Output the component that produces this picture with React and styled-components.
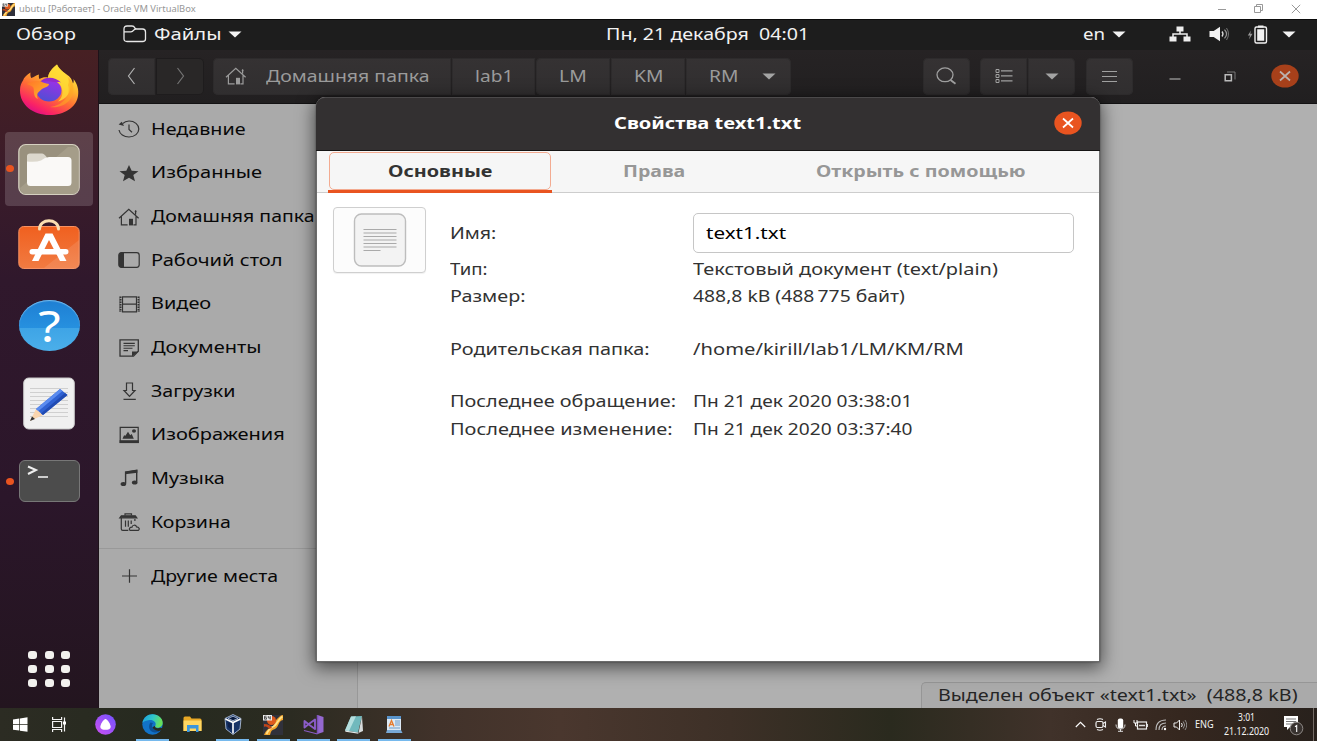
import React, { useLayoutEffect, useRef, useState } from 'react';
import styled, { createGlobalStyle, css } from 'styled-components';

const Global = createGlobalStyle`
  * { box-sizing: border-box; }
  html, body { margin: 0; padding: 0; overflow: hidden; }
  body { font-family: "Noto Sans", "Open Sans", sans-serif; }
`;

/* ---------- stretched text ---------- */
const TextBox = styled.span`
  display: inline-block;
  flex: none;
  width: ${(p) => p.$w}px;
  white-space: pre;
  line-height: 1.3;
`;
const TextInner = styled.span`
  display: inline-block;
  transform-origin: 0 50%;
`;
function Text({ w, children, className }) {
  const ref = useRef(null);
  const [scale, setScale] = useState(1);
  useLayoutEffect(() => {
    if (ref.current) setScale(w / ref.current.offsetWidth);
  }, [w]);
  return (
    <TextBox $w={w} className={className}>
      <TextInner ref={ref} style={{ transform: `scaleX(${scale})` }}>{children}</TextInner>
    </TextBox>
  );
}

/* ---------- screen ---------- */
const Screen = styled.div`
  width: 1317px;
  height: 741px;
  display: flex;
  flex-direction: column;
  overflow: hidden;
  background: #fff;
`;
const HostTitle = styled.header`
  height: 19px;
  flex: none;
  display: flex;
  align-items: center;
  padding: 0 16px 0 2px;
  background: #fff;
  color: #979797;
  font-size: 9.6px;
`;
const HostName = styled(Text)`margin-left: 4px;`;
const HostControls = styled.div`
  margin-left: auto;
  height: 17px;
  display: flex;
  align-items: center;
  gap: 27px;
  align-self: flex-start;
`;
const Guest = styled.main`
  position: relative;
  height: 689px;
  flex: none;
  display: flex;
  flex-direction: column;
`;
const TopBar = styled.div`
  height: 31px;
  flex: none;
  display: grid;
  grid-template-columns: 606px 203px 1fr;
  align-items: center;
  padding-bottom: 2px;
  background: #1d1d1d;
  border-top: 1px solid #0b0b0b;
  color: #f2f2f2;
  font-size: 16.6px;
`;
const BarGroup = styled.div`
  display: flex;
  align-items: center;
  padding-left: ${(p) => p.$start}px;
`;
const Gap = styled.span`flex: none; width: ${(p) => p.$w}px;`;
const Desktop = styled.div`flex: 1; display: flex; min-height: 0;`;

/* ---------- dock ---------- */
const Dock = styled.nav`
  width: 99px;
  flex: none;
  display: flex;
  flex-direction: column;
  gap: 4.3px;
  padding: 4px 5px 0;
  background: linear-gradient(#472023 0, #3c1c29 110px, #30182c 230px, #2b162a 450px, #23151f 658px);
  border-right: 1px solid #1d1219;
`;
const DockItem = styled.div`
  position: relative;
  width: 88px;
  height: 74px;
  flex: none;
  display: flex;
  align-items: center;
  justify-content: center;
  padding-bottom: ${(p) => p.$lift || 0}px;
  border-radius: 4px;
  background: ${(p) => (p.$active ? 'rgba(255,255,255,.16)' : 'transparent')};
`;
const Running = styled.i`
  position: absolute;
  left: .5px;
  top: 33px;
  width: 8px;
  height: 7px;
  border-radius: 50%;
  background: #e95420;
`;
const AppGrid = styled.div`
  margin: auto auto 21px;
  display: grid;
  grid-template-columns: repeat(3, 9px);
  grid-auto-rows: 8px;
  column-gap: 7.5px;
  row-gap: 5.8px;
`;
const Dot = styled.i`background: #f2f1ee; border-radius: 3px;`;

/* ---------- file manager ---------- */
const FileWindow = styled.section`flex: 1; display: flex; flex-direction: column; min-width: 0;`;
const Toolbar = styled.div`
  height: 54px;
  flex: none;
  display: flex;
  align-items: flex-start;
  padding: 8px 0 0 9px;
  background: linear-gradient(#262324, #211f20);
  border-bottom: 1px solid #131213;
  color: #9b9b9b;
  font-size: 16.6px;
`;
const ToolButton = styled.div`
  height: 37px;
  width: ${(p) => p.$w}px;
  flex: none;
  display: flex;
  align-items: center;
  justify-content: center;
  padding-bottom: 1px;
  background: ${(p) => (p.$dim ? '#292727' : 'linear-gradient(#353233, #302e2f)')};
  box-shadow: inset 0 0 0 1px ${(p) => (p.$dim ? '#1e1c1d' : '#2d2b2c')};
  border-radius: ${(p) => p.$r || '5px'};
  margin-right: ${(p) => (p.$mr === undefined ? 1 : p.$mr)}px;
`;
const PathName = styled(Text)`margin-bottom: 1px;`;
const WindowControls = styled.div`
  height: 36px;
  margin-left: 36.5px;
  display: flex;
  align-items: center;
`;
const Body = styled.div`flex: 1; display: flex; min-height: 0;`;
const Sidebar = styled.aside`
  width: 259px;
  flex: none;
  padding-top: 3.5px;
  background: #aaaaaa;
  border-right: 1px solid #989898;
  color: #080808;
  font-size: 16.6px;
`;
const Place = styled.div`
  height: 43.65px;
  display: flex;
  align-items: center;
  padding-left: 19px;
  gap: 11px;
`;
const PlaceName = styled(Text)`margin-bottom: 1.6px;`;
const Divider = styled.div`height: 1px; background: #999; margin: 4.4px 0 5.3px;`;
const Content = styled.div`
  flex: 1;
  display: flex;
  align-items: flex-end;
  justify-content: flex-end;
  background: #b0b0b0;
`;
const Status = styled.div`
  width: 396px;
  height: 26px;
  display: flex;
  align-items: center;
  padding-left: 16px;
  border: 1px solid #969696;
  border-width: 1px 0 0 1px;
  border-radius: 5px 0 0 0;
  background: #aaa;
  color: #252525;
  font-size: 17px;
`;

/* ---------- dialog ---------- */
const Dialog = styled.section`
  position: absolute;
  left: 316px;
  top: 78px;
  width: 784px;
  height: 565px;
  display: flex;
  flex-direction: column;
  background: #fff;
  border: 1px solid #6b6b6b;
  border-top: 0;
  border-radius: 9px 9px 0 0;
  box-shadow: 0 4px 17px 2px rgba(0,0,0,.55), 0 0 2px rgba(0,0,0,.5);
`;
const DialogHeader = styled.header`
  height: 54px;
  margin: 0 -1px;
  flex: none;
  display: grid;
  grid-template-columns: 298px 187px 1fr;
  align-items: center;
  padding-bottom: 2px;
  background: #333031;
  border-top: 1px solid #4b494a;
  border-bottom: 1px solid #151414;
  border-radius: 9px 9px 0 0;
  color: #fff;
  font-size: 16.4px;
  font-weight: 700;
`;
const TitleText = styled(Text)`grid-column: 2; margin-bottom: 1px;`;
const CloseSlot = styled.div`display: flex; justify-content: flex-end; padding-right: 18px;`;
const Tabs = styled.div`
  height: 42px;
  flex: none;
  display: flex;
  padding-left: 10.5px;
  background: #f6f6f6;
  border-bottom: 1px solid #cdcdcd;
  font-size: 16.4px;
  font-weight: 700;
`;
const Tab = styled.div`
  height: 42px;
  width: ${(p) => p.$w}px;
  display: flex;
  justify-content: center;
  color: #979797;
  padding: ${(p) => (p.$active ? '1px 1px 0' : '0')};
  ${(p) => p.$active && css`color: #333; border-bottom: 3px solid #e95420;`}
`;
const TabFace = styled.div`
  width: 100%;
  height: ${(p) => (p.$active ? 38 : 40)}px;
  display: flex;
  align-items: center;
  justify-content: center;
  padding-bottom: ${(p) => (p.$active ? 1 : 2)}px;
  border: 1px solid ${(p) => (p.$active ? '#f3ab91' : 'transparent')};
  border-bottom-width: ${(p) => (p.$active ? 1 : 0)}px;
  border-radius: ${(p) => (p.$active ? '5px' : '0')};
`;
const Page = styled.div`flex: 1; display: flex; padding: 14px 0 0 16px;`;
const Thumb = styled.div`
  width: 93px;
  height: 66px;
  flex: none;
  display: flex;
  align-items: center;
  justify-content: center;
  border: 1px solid #cfcfcf;
  border-radius: 4px;
  background: #fcfcfc;
  box-shadow: 0 1px 1px rgba(0,0,0,.06);
`;
const Properties = styled.div`
  padding: 6px 0 0 24.4px;
  font-size: 16.6px;
  color: #323232;
`;
const Property = styled.div`
  display: grid;
  grid-template-columns: 243px 381px;
  align-items: center;
  height: ${(p) => p.$h}px;
  margin-top: ${(p) => p.$mt || 0}px;
`;
const Entry = styled.div`
  height: 39.5px;
  display: flex;
  align-items: center;
  padding: 0 0 1px 11.5px;
  border: 1px solid #c6c6c6;
  border-radius: 5px;
  color: #000;
`;

/* ---------- host taskbar ---------- */
const Taskbar = styled.footer`
  height: 33px;
  flex: none;
  display: flex;
  background: linear-gradient(90deg, #2c2c23 0, #262a1f 170px, #2b2b21 290px, #41322a 440px, #4a372e 560px, #3d3027 730px, #2a2a1e 890px, #40322a 1050px, #35271f 1180px, #28211c 1317px);
  color: #f4f4f4;
`;
const Task = styled.div`
  width: ${(p) => p.$w || 40.3}px;
  flex: none;
  display: flex;
  align-items: center;
  justify-content: center;
  ${(p) => p.$open && css`
    background: linear-gradient(#76b9ed, #76b9ed) center bottom / 33px 2px no-repeat;
  `}
`;
const Tray = styled.div`
  margin-left: auto;
  display: flex;
  font-size: 10.6px;
`;
const TraySlot = styled.div`
  width: ${(p) => p.$w}px;
  display: flex;
  flex-direction: column;
  align-items: center;
  justify-content: center;
  padding-bottom: ${(p) => p.$lift || 0}px;
`;
const ClockLine = styled(Text)`line-height: 14px;`;
const ShowDesktop = styled.div`width: 4px; border-left: 1px solid #746b65;`;

/* ---------- icons ---------- */
const Icon = styled.svg`flex: none; display: block;`;
const Svg = ({ w, h, children, ...rest }) => (
  <Icon width={w} height={h} viewBox={`0 0 ${w} ${h}`} fill="none" {...rest}>{children}</Icon>
);
const Caret = ({ c = '#f2f2f2' }) => <Svg w={14} h={7}><path d="M.5.5h13L7 6.5z" fill={c} /></Svg>;
const VmIcon = ({ s = 13 }) => (
  <Icon width={s} height={s} viewBox="0 0 20 20">
    <rect width="20" height="20" fill="#30313b" />
    <path d="M20 0v5c-5 1-4 7-8 9-4 1-4 3-5 6H1c2-4 3-6 7-7 4-2 3-7 7-10 2-2 3-3 5-3z" fill="#f0a42c" />
    <path d="M19.500 1.500c-5 3-5 8-9 10-4 1-5 4-7 7.500" stroke="#ffe28a" strokeWidth="1.800" fill="none" />
    <circle cx="8.500" cy="5.500" r="4.500" fill="#dd5a1e" />
    <path d="M1 9c4 0 6 1 8 4l-3 1c-1-2-3-3-5-2z" fill="#c2461a" />
    <rect width="9" height="5.500" fill="#eee" />
    <path d="M3.500 1.200h-2v3h2V2.700h-2M5.300 1v2h2.200M7.200 1v3.500" stroke="#333" strokeWidth=".8" fill="none" />
  </Icon>
);
const Close = ({ fill, stroke }) => (
  <Svg w={28} h={24}><ellipse cx="14" cy="12" rx="13.700" ry="11.600" fill={fill} /><path d="M9 7.500l10 9M19 7.500l-10 9" stroke={stroke} strokeWidth="1.700" /></Svg>
);
const Home = ({ c = '#343434' }) => (
  <Svg w={22} h={18}>
    <path d="M1 10.200L10.800 1.200l9.800 9M3.400 8.400v8.400h6.200M18 8.400v8.400h-2.600M17.600 2.600v3.800" stroke={c} strokeWidth="1.200" />
    <path d="M11 17.400v-6.600h4v6.600z" fill={c} /><circle cx="17.600" cy="3.400" r=".9" fill={c} />
  </Svg>
);

const K = '#343434';
const placeIcons = {
  recent: <g stroke={K} strokeWidth="1.200"><path d="M4.600 3.700C6.200 2 8.400 1 11 1c5.600 0 9.800 3.600 9.800 8s-4.200 8-9.800 8C5.800 17 1.700 14 1 10" /><path d="M11 4.500v5l3 2.700" /><path d="M.6 4.500l3.200-2.700 2.200 4.200z" fill={K} stroke="none" /></g>,
  star: <path d="M11 1l2.700 5.700 6.800.5-5.200 3.900 1.700 6.100-6-3.400-6 3.400 1.700-6.100-5.200-3.900 6.800-.5z" fill={K} />,
  desktop: <g><rect x=".8" y="1.700" width="20.400" height="14.600" rx="2.500" stroke={K} strokeWidth="1.200" /><path d="M1 3.500q0-1.800 1.800-1.800H6v14.600H2.800Q1 16.300 1 14.500z" fill={K} /></g>,
  video: <g stroke={K} strokeWidth="1.200"><path d="M4.500 1.800h14v15h-14zM4.500 9.200h14" /><path d="M2.600 1.500V17M20.400 1.500V17" strokeWidth="1.800" strokeDasharray="1.500 1" /><path d="M1.800 1.500V17M21.200 1.500V17" strokeWidth=".6" /></g>,
  docs: <g stroke={K} strokeWidth="1.300"><path d="M2 .8h18.300v11.500l-4.800 4.900H2z" /><path d="M5.500 4.400h11.300M5.500 6.800h11.300M5.500 9.200h9M5.500 11.600h4.500" strokeWidth="1.100" /><path d="M14 17.500v-5h6.500z" fill={K} stroke="none" /></g>,
  down: <path d="M8.500 1h6v7.500H17l-5.500 5.800L6 8.500h2.500zM5.500 17.300h12.300" stroke={K} strokeWidth="1.200" />,
  pictures: <g><path d="M2.200 1.400h18v15h-18z" stroke={K} strokeWidth="1.200" /><path d="M1.600 14.200h19.200v2.900H1.600z" fill={K} /><path d="M4.500 12.700l1.600-3.500 1.300.5 2.600-4 2.200 3.600 1.500-1.400 2.100 4.800z" fill={K} /><ellipse cx="16" cy="5" rx="2" ry="1.700" fill={K} /></g>,
  music: <g><path d="M7.600 14.500V3.200L18.700 1.400v11.400" stroke={K} strokeWidth="1.400" /><path d="M7 2.700L19.400.8v3L7 5.300z" fill={K} /><ellipse cx="5.400" cy="15" rx="2.800" ry="2" fill={K} /><ellipse cx="16.700" cy="13.500" rx="2.800" ry="2" fill={K} /></g>,
  trash: <g stroke={K} strokeWidth="1.200"><path d="M1.800 4.800h17l-1.500-2H3.300z" fill={K} /><path d="M7 2.500V.8h6.500v1.700M3.300 5v11q0 1.300 1.500 1.300h5.500M7.500 7.500v6.300M10.300 7.500v6.300M13.200 7.500v3.500M16.900 6v2" /><path d="M12 17.400c-1.500-1.600 0-3.300 2-3.300.2-2.400 4-2.500 4.500-.3 2.500 0 3.700 2.400 1.700 3.600z" /></g>,
  plus: <path d="M11.500 2.300v13.400M4 9h15" stroke={K} strokeWidth="1.200" />,
};
const PlaceIcon = ({ name }) => (name === 'home' ? <Home /> : <Svg w={22} h={18}>{placeIcons[name]}</Svg>);

const Firefox = () => (
  <Svg w={60} h={52}>
    <defs>
      <linearGradient id="ffa" x1=".85" y1="0" x2=".25" y2="1"><stop stopColor="#fff44f" /><stop offset=".35" stopColor="#ffb52e" /><stop offset=".6" stopColor="#ff6b35" /><stop offset=".85" stopColor="#fa2365" /><stop offset="1" stopColor="#d80b8c" /></linearGradient>
      <linearGradient id="ffb" x1=".8" y1="0" x2=".4" y2="1"><stop stopColor="#a02fe8" /><stop offset="1" stopColor="#514ed4" /></linearGradient>
      <linearGradient id="ffc" x1="0" y1="0" x2="1" y2="1"><stop stopColor="#ff7628" /><stop offset="1" stopColor="#ffb82b" /></linearGradient>
    </defs>
    <path d="M38 .5c2 5 6 7 9 9.500 5 3 6 6 7 9.500.8-1 .8-3 .5-4.500 4 5 5.500 11 4.500 17C57.500 43.500 45 51 30.500 51 14 51 1 41 1 26.500c0-5 1.500-8 3-10 .8-3 4-6 7.500-8-.3 2 0 4 .7 5.500 3-.8 4.500-2.500 7.800-3.500-.5 2 0 3.500.5 4.500 3-2 6-2 8.500-1.500C29.500 9 33 4 38 .5z" fill="url(#ffa)" />
    <path d="M38 .5c3 6 11 10 13 18 2 10-4 17-12 19 5-4 6-11 2-17-4-5-11-5-12-7C29.500 9 33 4 38 .5z" fill="#ffdd35" opacity=".8" />
    <path d="M49 21c3 10-4 20-18 22 14 2 26-8 23-22-1-4-3-6-5-8 1 4 1 5 0 8z" fill="#ffaa22" opacity=".55" />
    <ellipse cx="30" cy="26.500" rx="12.500" ry="11" fill="url(#ffb)" />
    <path d="M21 18c4-5.500 15-6 21 .5-3-1-5 0-7-.5-5-1-9-1-14 0z" fill="#9529ca" />
    <path d="M8 20c4-3 11-4 16-1.500 2 1 5 1 6 1.500 0 3-5 3.500-7 5-5 4-6 6-4 10C13 33 16 25 14 23c-2-1.500-4-2-6-3z" fill="url(#ffc)" />
  </Svg>
);
const FilesApp = () => (
  <Svg w={62} h={53}>
    <rect x=".8" y="1.500" width="60.400" height="50" rx="7" fill="#99917e" stroke="#d5d0c0" strokeWidth="1.200" />
    <path d="M2 45L50 4h6q5 1 5 6v35q0 5-6 6H8q-5 0-6-6z" fill="#aaa38f" opacity=".7" />
    <path d="M9 13q0-2.500 3-2.500h12q2 0 5 4v6H9z" fill="#dcd8cd" />
    <path d="M9 18.500q9 1 14-1 4-3.500 8-3.500h19q3.500 0 3.500 3.500v22q0 3.500-3.500 3.500H12.500Q9 43 9 39.500z" fill="#faf9f7" />
  </Svg>
);
const Software = () => (
  <Svg w={62} h={52}>
    <defs><linearGradient id="sw" x1="0" y1="0" x2="0" y2="1"><stop stopColor="#f0601f" /><stop offset="1" stopColor="#f17b42" /></linearGradient></defs>
    <rect x=".8" y="8.500" width="60.400" height="42" rx="5" fill="url(#sw)" stroke="#f79162" strokeWidth="1" />
    <path d="M26 50L61 22v24q0 4-5 4.500z" fill="#fff" opacity=".1" />
    <path d="M21.500 11c0-11 19-11 19 0" stroke="#f9dfb2" strokeWidth="3" strokeLinecap="round" />
    <path d="M27.500 15.500h7L48.500 43h-6.500L31 22 20.500 43H14z" fill="#fff" /><rect x="11.500" y="31" width="39" height="5.500" rx="2.700" fill="#fff" />
  </Svg>
);
const HelpFace = styled.div`
  width: 61px;
  height: 51px;
  border-radius: 50%;
  display: flex;
  align-items: center;
  justify-content: center;
  padding-left: 1px;
  background: linear-gradient(#1e7fd3 0, #2690df 54%, #3ea4e6 55%, #4bafea 100%);
  box-shadow: inset 0 1px 1px #76bbec;
  color: #fff;
  font-size: 43px;
  line-height: 50px;
`;
const HelpMark = styled.span`transform: scaleX(1.2);`;
const Editor = () => (
  <Svg w={52} h={53}>
    <rect x=".7" y="1" width="50.600" height="51" rx="5" fill="#f0f0f0" stroke="#c8c8c8" />
    <path d="M7 11.500h38M7 15.500h38M7 19.500h38M7 23.500h38M7 27.500h38M7 31.500h38M7 35.500h38M7 39.500h38" stroke="#cfcfcf" strokeWidth="1" />
    <path d="M7 44l6-12 7 6z" fill="#f9d5ae" /><path d="M7 44l2-4.500 3 2.500z" fill="#333" />
    <path d="M13 32L37 12l7.500 6L20 38z" fill="#2f61d2" /><path d="M13 32L37 12l2.500 2L15.500 34z" fill="#5a8bef" /><path d="M18 36.500L42 16l2.500 2L20 38z" fill="#214bb2" />
  </Svg>
);
const TerminalFace = styled.div`
  width: 61px;
  height: 42px;
  border-radius: 6px;
  border: 1px solid #777;
  background: #4c4c4c;
  padding: 2px 0 0 7px;
`;

const Places = [
  ['recent', 'Недавние', 95], ['star', 'Избранные', 111], ['home', 'Домашняя папка', 163],
  ['desktop', 'Рабочий стол', 131], ['video', 'Видео', 60], ['docs', 'Документы', 111],
  ['down', 'Загрузки', 84], ['pictures', 'Изображения', 134], ['music', 'Музыка', 74], ['trash', 'Корзина', 80],
];
const Details = [
  ['Тип:', 38, 'Текстовый документ (text/plain)', 305, 26, 3],
  ['Размер:', 75, '488,8 kB (488\u2009775 байт)', 212, 27, 0],
  ['Родительская папка:', 200, '/home/kirill/lab1/LM/KM/RM', 271, 27, 26],
  ['Последнее обращение:', 226, 'Пн 21 дек 2020 03:38:01', 219, 27, 25.5],
  ['Последнее изменение:', 222, 'Пн 21 дек 2020 03:37:40', 219, 28, 0.5],
];

function TaskIcons() {
  return (
    <>
      <Task $w={40}><Svg w={15} h={15}><path d="M0 2.400l6.300-.9v5.700H0zM7 1.400L14.500.3v6.900H7zM0 8h6.300v5.600L0 12.700zM7 8h7.500v6.800L7 13.700z" fill="#fff" /></Svg></Task>
      <Task $w={38}><Svg w={15} h={15}><path d="M.6 0v2.500h9V0M.6 15v-2.500h9V15M.6 4.500h9v6h-9zM12.500.5v14" stroke="#f3f3f3" strokeWidth="1.200" /><path d="M11 4.500h3v3h-3z" fill="#fff" /></Svg></Task>
      <Task $w={54}><Svg w={21} h={21}><defs><linearGradient id="ya" x1="1" y1="0" x2="0" y2="1"><stop stopColor="#6f52ff" /><stop offset="1" stopColor="#cf50f2" /></linearGradient></defs><circle cx="10.500" cy="10.500" r="10.300" fill="url(#ya)" /><path d="M10.500 5c1.800 0 5.200 5.500 5.200 8 0 3.800-10.400 3.800-10.400 0 0-2.500 3.400-8 5.200-8z" fill="#fff" /></Svg></Task>
      <Task $open><Svg w={21} h={21}><defs><linearGradient id="ed" x1="0" y1="0" x2="1" y2=".3"><stop stopColor="#1b9de2" /><stop offset=".55" stopColor="#30c6c8" /><stop offset="1" stopColor="#67e05b" /></linearGradient></defs><circle cx="10.500" cy="10.500" r="10.200" fill="#1273c8" /><path d="M.4 9C1.500 3.500 5.500.3 10.500.3c6 0 10.200 4.200 10.200 8.500 0 3.300-2.500 5-5.200 5-2 0-3-.8-2.200-2C15 8 11 5.500 7.500 6 4 6.300 1.500 7.500.4 9z" fill="url(#ed)" /><path d="M8.500 8.500c-3 4-1 9.500 4 10 3 .3 5.500-1 7-3-4 1.700-8.500.5-9.500-3-.4-1.700.3-2.700 1-3.500z" fill="#0c4f94" /><path d="M13.200 11.800c-1 1.800 1.800 3.200 5 2l2.800.5-1.500 2c-4 1.500-8 0-9-3z" fill="#282b20" /></Svg></Task>
      <Task><Svg w={19} h={17}><path d="M.5 2q0-1.500 1.500-1.500h5l1.500 2H17q1.500 0 1.500 1.500v11H.5z" fill="#e8a825" /><path d="M.5 4.500h18V15H.5z" fill="#ffd763" /><path d="M4 9h11.500v7H13v-3.500H6.700V16H4z" fill="#3a96dd" /></Svg></Task>
      <Task $open><Svg w={18} h={21}><path d="M9 .5l8 4-1 10.500L9 20.500 2 15 1 4.500z" fill="#173468" stroke="#aebed8" strokeWidth=".9" /><path d="M1.500 5L9 8.500 16.500 5M9 8.500v11" stroke="#fff" strokeWidth="1.600" /><path d="M4 4.500l5-2.300 5 2.300-5 2.200z" fill="#0b1d42" stroke="#d9e1ef" strokeWidth=".7" /><path d="M3.500 8l4 2v5.500l-3.500-2.500z" fill="#0d214b" /></Svg></Task>
      <Task $open><VmIcon s={20} /></Task>
      <Task $open><Svg w={21} h={21}><path d="M14.500 1L20.500 3v15l-6 2z" fill="#9468cf" /><path d="M14.500 1v19" stroke="#7c50bb" strokeWidth="1.500" /><path d="M1.500 7v6.500l4-3.200zM5.500 10.300l6.500-4.800v9.500z" stroke="#8a5cc7" strokeWidth="1.900" strokeLinejoin="round" /><path d="M1 16.500l13.500 3.500" stroke="#8a5cc7" strokeWidth="1.200" /></Svg></Task>
      <Task $open><Svg w={20} h={20}><path d="M7 1.500l11-.5-4 16.500L1 15.500z" fill="#71b9bd" /><path d="M7 1.500l5-.2L5 16l-4-.5z" fill="#b5dfdf" /><path d="M18 1l1 15-4.500 2z" fill="#d7dcdc" /><path d="M1 15.500l13 2 .5 1.200-13-2z" fill="#e3e8e8" /></Svg></Task>
      <Task $open $w={42}><Svg w={17} h={19}><path d="M1 1h14v16H1z" fill="#dce9f5" /><path d="M1 1h14v3H1z" fill="#5a94cb" /><path d="M9 6h5M9 8h5M9 10h5M3 13h11" stroke="#6c9cc9" /><path d="M3 11.500L5.500 5.500 8 11.500M4 9.500h3" stroke="#e57b2e" strokeWidth="1.300" /><path d="M1 15h14l1.500 3H0z" fill="#78a9d6" /></Svg></Task>
    </>
  );
}

export default function App() {
  return (
    <Screen>
      <Global />
      <HostTitle>
        <VmIcon />
        <HostName w={177}>ubutu [Работает] - Oracle VM VirtualBox</HostName>
        <HostControls>
          <Svg w={10} h={10}><path d="M1 5.500h8" stroke="#999" /></Svg>
          <Svg w={10} h={10}><path d="M.5 2.500h6v6h-6zM2.500 2.500v-2h6v6h-2" stroke="#999" /></Svg>
          <Svg w={10} h={10}><path d="M.8.8l8.400 8.400M9.200.8L.8 9.200" stroke="#999" /></Svg>
        </HostControls>
      </HostTitle>

      <Guest>
        <TopBar>
          <BarGroup $start={16}>
            <Text w={60.5}>Обзор</Text><Gap $w={46} />
            <Svg w={24} h={18}><path d="M1 14V4q0-3 3-3h5q2 0 2.500 1.500t2.500 1.500h5.500q3 0 3 3v7q0 2.500-3 2.500H4q-3 0-3-2.500zM1.500 6.800h6.500q1.500 0 2.500-1.400t2.500-1.400" stroke="#e8e8e8" strokeWidth="1.300" /></Svg>
            <Gap $w={7} /><Text w={67}>Файлы</Text><Gap $w={7} /><Caret />
          </BarGroup>
          <Text w={203.5}>Пн, 21 декабря  04:01</Text>
          <BarGroup $start={273.5}>
            <Text w={22.5}>en</Text><Gap $w={7} /><Caret /><Gap $w={43} />
            <Svg w={22} h={16}><path d="M7.500.5h7v5h-7zM.5 10.500h7v5h-7zM14.500 10.500h7v5h-7z" fill="#eee" /><path d="M11 5v3M4 11V8h14v3" stroke="#eee" strokeWidth="1.500" /></Svg>
            <Gap $w={17.5} />
            <Svg w={21} h={16}><path d="M.5 5h4.200L11 .8v14.400L4.700 11H.5z" fill="#f2f2f2" /><path d="M13 5.500q2 2.500 0 5" stroke="#ddd" strokeWidth="1.300" /><path d="M15.500 3.600q4.200 4.400 0 8.800" stroke="#999" strokeWidth="1.200" /><path d="M17.500 2q4 6 0 12" stroke="#737373" strokeWidth="1" /></Svg>
            <Gap $w={17.5} />
            <Svg w={21} h={19}><path d="M4 5.500L.8 10.500H3L2 14.500l3.500-5.800H3.200z" fill="#999" /><rect x="8" y="2" width="11.500" height="16" rx="1.500" stroke="#f2f2f2" strokeWidth="1.400" /><path d="M11 .5h5.500v2H11zM10.200 4.300h7v11.500h-7z" fill="#f2f2f2" /></Svg>
            <Gap $w={14} /><Caret />
          </BarGroup>
        </TopBar>

        <Desktop>
          <Dock>
            <DockItem $lift={2}><Firefox /></DockItem>
            <DockItem $active><Running /><FilesApp /></DockItem>
            <DockItem $lift={7}><Software /></DockItem>
            <DockItem><HelpFace><HelpMark>?</HelpMark></HelpFace></DockItem>
            <DockItem $lift={1}><Editor /></DockItem>
            <DockItem $lift={2}><Running /><TerminalFace><Svg w={24} h={17}><path d="M1 3.500l8 3.500-8 4" stroke="#eee" strokeWidth="2" /><path d="M11 14h10" stroke="#eee" strokeWidth="1.600" /></Svg></TerminalFace></DockItem>
            <AppGrid>{Array.from({ length: 9 }, (_, i) => <Dot key={i} />)}</AppGrid>
          </Dock>

          <FileWindow>
            <Toolbar>
              <ToolButton $w={47} $r="5px 0 0 5px"><Svg w={9} h={18}><path d="M7.500 1L1.500 9l6 8" stroke="#b0b0b0" strokeWidth="1.200" /></Svg></ToolButton>
              <ToolButton $w={48} $dim $r="0 5px 5px 0" $mr={9}><Svg w={9} h={18}><path d="M1.500 1l6 8-6 8" stroke="#747474" strokeWidth="1.200" /></Svg></ToolButton>
              <ToolButton $w={238} $r="5px 0 0 5px"><Gap $w={1.5} /><Home c="#9b9b9b" /><Gap $w={19.5} /><PathName w={163}>Домашняя папка</PathName><Gap $w={12} /></ToolButton>
              <ToolButton $w={83} $r="0"><PathName w={38}>lab1</PathName></ToolButton>
              <ToolButton $w={74} $r="5px 0 0 5px"><PathName w={28}>LM</PathName></ToolButton>
              <ToolButton $w={74} $r="0"><PathName w={29}>KM</PathName></ToolButton>
              <ToolButton $w={105} $r="0 5px 5px 0" $mr={131.5}><Gap $w={8} /><PathName w={29}>RM</PathName><Gap $w={24} /><Caret c="#a4a4a4" /></ToolButton>
              <ToolButton $w={47} $mr={10.5}><Svg w={21} h={18}><ellipse cx="9" cy="7.800" rx="8" ry="6.900" stroke="#a0a0a0" strokeWidth="1.300" /><path d="M14.500 13l5 3.800" stroke="#a0a0a0" strokeWidth="1.800" /></Svg></ToolButton>
              <ToolButton $w={47} $r="5px 0 0 5px"><Svg w={18} h={16}><path d="M1 1.500h3v3H1zM1 6.500h3v3H1zM1 11.500h3v3H1z" stroke="#a0a0a0" /><path d="M6 2.900h11.500M6 7.900h11.500M6 12.900h11.500" stroke="#a0a0a0" strokeWidth="1.400" /></Svg></ToolButton>
              <ToolButton $w={47} $r="0 5px 5px 0" $mr={10.5}><Caret c="#a4a4a4" /></ToolButton>
              <ToolButton $w={47} $mr={0}><Svg w={15} h={13}><path d="M0 1.500h15M0 6.500h15M0 11.500h15" stroke="#a0a0a0" strokeWidth="1.200" /></Svg></ToolButton>
              <WindowControls>
                <Svg w={12} h={8}><path d="M.5 7h11" stroke="#a8a8a8" strokeWidth="1.200" /></Svg><Gap $w={43} />
                <Svg w={12} h={11}><path d="M1.200 3.700h6.200v6H1.200z" stroke="#bbb" strokeWidth="1.500" /><path d="M3 1h8v7.500" stroke="#777" strokeWidth="1" /></Svg><Gap $w={34.5} />
                <Close fill="#a7401a" stroke="#bcb2ae" />
              </WindowControls>
            </Toolbar>
            <Body>
              <Sidebar>
                {Places.map(([icon, name, w]) => <Place key={name}><PlaceIcon name={icon} /><PlaceName w={w}>{name}</PlaceName></Place>)}
                <Divider />
                <Place><PlaceIcon name="plus" /><PlaceName w={127}>Другие места</PlaceName></Place>
              </Sidebar>
              <Content><Status><Text w={360}>Выделен объект «text1.txt»  (488,8 kB)</Text></Status></Content>
            </Body>
          </FileWindow>
        </Desktop>

        <Dialog>
          <DialogHeader>
            <TitleText w={187}>Свойства text1.txt</TitleText>
            <CloseSlot><Close fill="#e95420" stroke="#fff" /></CloseSlot>
          </DialogHeader>
          <Tabs>
            <Tab $w={224.5} $active><TabFace $active><Text w={104}>Основные</Text></TabFace></Tab>
            <Tab $w={204}><TabFace><Text w={62}>Права</Text></TabFace></Tab>
            <Tab $w={330}><TabFace><Text w={210}>Открыть с помощью</Text></TabFace></Tab>
          </Tabs>
          <Page>
            <Thumb>
              <Svg w={54} h={55}>
                <rect x="1.500" y="1" width="51" height="52" rx="7" fill="#f3f3f3" stroke="#bdbdbd" strokeWidth="1.400" />
                <path d="M10.500 16.500h33M10.500 20h33M10.500 23.500h33M10.500 27h33M10.500 30.500h33M10.500 34h33M10.500 37.500h17" stroke="#aaa" strokeWidth="1.100" />
              </Svg>
            </Thumb>
            <Properties>
              <Property $h={40}><Text w={46}>Имя:</Text><Entry><Text w={79.5}>text1.txt</Text></Entry></Property>
              {Details.map(([label, lw, value, vw, h, mt]) => (
                <Property key={label} $h={h} $mt={mt}><Text w={lw}>{label}</Text><Text w={vw}>{value}</Text></Property>
              ))}
            </Properties>
          </Page>
        </Dialog>
      </Guest>

      <Taskbar>
        <TaskIcons />
        <Tray>
          <TraySlot $w={20}><Svg w={11} h={7}><path d="M.8 6l4.700-4.700L10.200 6" stroke="#fff" strokeWidth="1.100" /></Svg></TraySlot>
          <TraySlot $w={20}><Svg w={12} h={13}><rect x="1" y="3.500" width="7" height="6" rx="1.500" stroke="#eee" strokeWidth="1.200" /><path d="M8 5.500l2.500-1.500v5L8 7.500M2 1.500Q5 0 8 1.500M2 11.500q3 1.500 6 0" stroke="#eee" strokeWidth="1.100" /></Svg></TraySlot>
          <TraySlot $w={19}><Svg w={11} h={14}><rect x="2.800" y=".5" width="5.400" height="10" rx="2" fill="#fff" /><path d="M1 6.500q0 4.500 4.500 4.500T10 6.500M5.500 11v2.500M3 13.300h5" stroke="#ddd" /></Svg></TraySlot>
          <TraySlot $w={21}><Svg w={15} h={12}><rect x="4.500" y="3" width="9" height="7" stroke="#eee" strokeWidth="1.200" /><path d="M13.500 5h1.500v3h-1.500z" fill="#ddd" /><path d="M6 6.500h6" stroke="#ddd" strokeWidth="1.500" /><path d="M1 1v3h3V1M2.500 4v3h2" stroke="#fff" /></Svg></TraySlot>
          <TraySlot $w={20}><Svg w={12} h={12}><path d="M1 11Q1 1 11 1M4 11Q4 4 11 4M7 11q0-4 4-4" stroke="#bbb" strokeWidth="1.100" /><circle cx="10" cy="10" r="1.200" fill="#fff" /></Svg></TraySlot>
          <TraySlot $w={18}><Svg w={14} h={12}><path d="M1 4h2.500L6.500 1v10l-3-3H1z" stroke="#eee" /><path d="M8.500 4q1.500 2 0 4" stroke="#eee" /><path d="M10.200 2.500q3 3.500 0 7M12 1q3.500 5 0 10" stroke="#999" strokeWidth=".9" /></Svg></TraySlot>
          <TraySlot $w={31}><Text w={19}>ENG</Text></TraySlot>
          <TraySlot $w={53} $lift={1}><ClockLine w={17}>3:01</ClockLine><ClockLine w={45}>21.12.2020</ClockLine></TraySlot>
          <TraySlot $w={40.5}><Svg w={22} h={22}><path d="M2 2h14v11H8l-3 3v-3H2z" fill="#fff" /><path d="M4 5h10M4 7.500h10M4 10h6" stroke="#555" strokeWidth=".8" /><circle cx="14.500" cy="14.500" r="6.300" fill="#38322f" stroke="#8c8784" /><path d="M13 12.800l1.700-1.300v6.500" stroke="#fff" strokeWidth="1.100" /></Svg></TraySlot>
          <ShowDesktop />
        </Tray>
      </Taskbar>
    </Screen>
  );
}
